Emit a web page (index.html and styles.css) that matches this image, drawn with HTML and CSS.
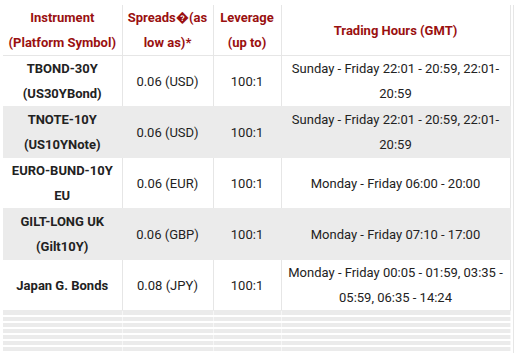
FILE: index.html
```html
<!DOCTYPE html>
<html>
<head>
<meta charset="utf-8">
<link rel="stylesheet" href="styles.css">
</head>
<body>
<div class="wrap">
<table class="spec">
  <colgroup>
    <col class="c1"><col class="c2"><col class="c3"><col class="c4">
  </colgroup>
  <thead>
    <tr>
      <th>Instrument<br>(Platform Symbol)</th>
      <th>Spreads&#xFFFD;(as low as)*</th>
      <th>Leverage<br>(up to)</th>
      <th>Trading Hours (GMT)</th>
    </tr>
  </thead>
  <tbody>
    <tr>
      <td class="name">TBOND-30Y<br>(US30YBond)</td>
      <td>0.06 (USD)</td>
      <td>100:1</td>
      <td>Sunday - Friday 22:01 - 20:59, 22:01-20:59</td>
    </tr>
    <tr class="alt">
      <td class="name">TNOTE-10Y<br>(US10YNote)</td>
      <td>0.06 (USD)</td>
      <td>100:1</td>
      <td>Sunday - Friday 22:01 - 20:59, 22:01-20:59</td>
    </tr>
    <tr>
      <td class="name">EURO-BUND-10Y<br>EU</td>
      <td>0.06 (EUR)</td>
      <td>100:1</td>
      <td>Monday - Friday 06:00 - 20:00</td>
    </tr>
    <tr class="alt">
      <td class="name">GILT-LONG UK<br>(Gilt10Y)</td>
      <td>0.06 (GBP)</td>
      <td>100:1</td>
      <td>Monday - Friday 07:10 - 17:00</td>
    </tr>
    <tr>
      <td class="name">Japan G. Bonds</td>
      <td>0.08 (JPY)</td>
      <td>100:1</td>
      <td>Monday - Friday 00:05 - 01:59, 03:35 - 05:59, 06:35 - 14:24</td>
    </tr>
    <tr class="stripe"><td></td><td></td><td></td><td></td></tr>
    <tr class="stripe"><td></td><td></td><td></td><td></td></tr>
    <tr class="stripe"><td></td><td></td><td></td><td></td></tr>
    <tr class="stripe"><td></td><td></td><td></td><td></td></tr>
    <tr class="stripe"><td></td><td></td><td></td><td></td></tr>
    <tr class="stripe"><td></td><td></td><td></td><td></td></tr>
    <tr class="stripe"><td></td><td></td><td></td><td></td></tr>
  </tbody>
</table>
</div>
</body>
</html>
```

FILE: styles.css
```css
html, body {
  margin: 0;
  background: #fff;
}
body {
  padding: 5px 0 0 3px;
  font-family: Roboto, "Liberation Sans", sans-serif;
  font-size: 13px;
  color: #222;
}
.wrap {
  width: 510px;
  border-right: 1px solid #e6e6e6;
}
.spec {
  width: 507px;
  table-layout: fixed;
  border-collapse: collapse;
}
.c1 { width: 119px; }
.c2 { width: 91px; }
.c3 { width: 68px; }
.c4 { width: 229px; }
.spec th,
.spec td {
  padding: 0 4px;
  line-height: 25px;
  text-align: center;
  vertical-align: middle;
  border-right: 1px solid #e6e6e6;
  border-bottom: 1px solid #ebebeb;
}
.spec th {
  color: #9a1010;
  font-weight: 700;
  height: 50px;
  border-bottom-color: #e6e6e6;
}
.spec td {
  height: 50px;
}
.spec td.name {
  font-weight: 700;
}
.spec tr.alt td {
  background: #ebebeb;
  border-right-color: #ebebeb;
}
.spec tr.stripe td {
  height: 4px;
  padding: 0;
  line-height: 0;
  font-size: 0;
  background: #ebebeb;
  border-bottom: 2px solid #fff;
  border-right: 1px solid #f6f6f6;
}
```
